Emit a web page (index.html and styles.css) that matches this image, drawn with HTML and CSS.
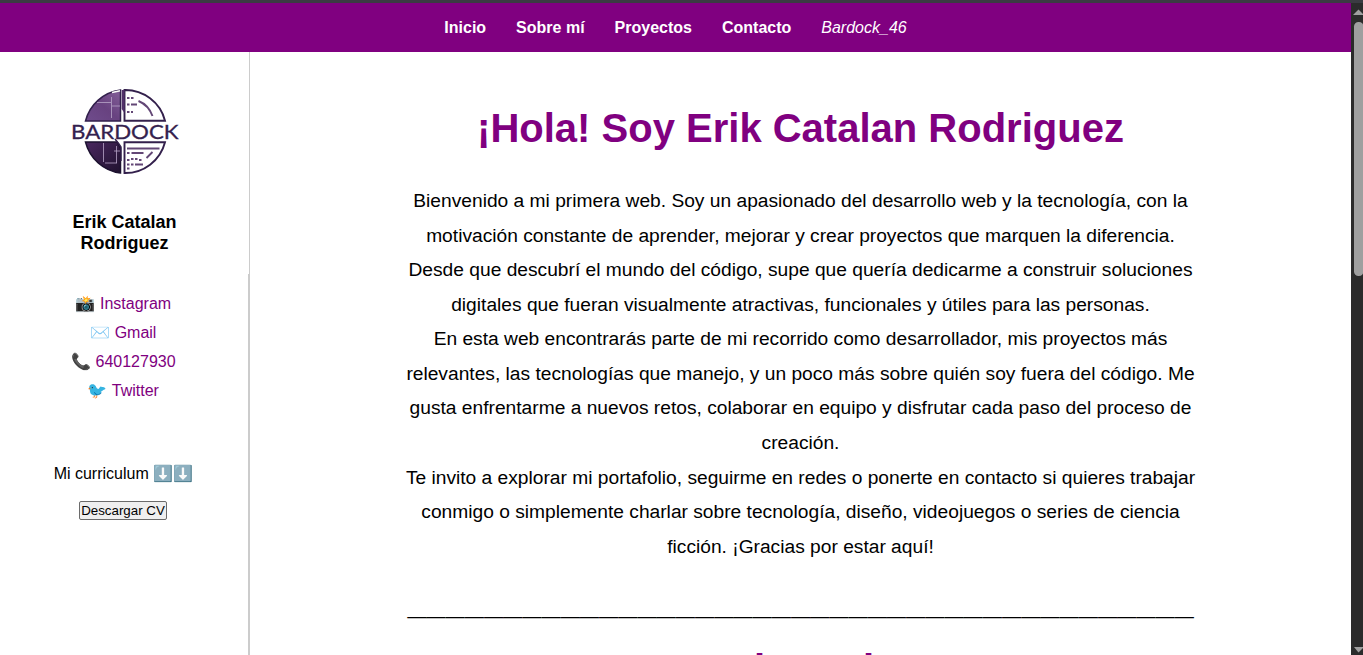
FILE: index.html
```html
<!DOCTYPE html>
<html lang="es">
<head>
<meta charset="utf-8">
<title>Erik Catalan Rodriguez</title>
<link rel="stylesheet" href="styles.css">
</head>
<body>
<div class="window">
<div class="page">
  <nav class="navbar">
    <a>Inicio</a><a>Sobre mí</a><a>Proyectos</a><a>Contacto</a><em>Bardock_46</em>
  </nav>
  <div class="columns">
    <aside class="sidebar">
      <div class="profile">
        <svg class="logo" viewBox="60 80 130 105" width="130" height="105">
          <defs>
            <linearGradient id="top" x1="0" y1="1" x2="1" y2="0"><stop offset="0" stop-color="#6f4c8c"/><stop offset=".5" stop-color="#684280"/><stop offset="1" stop-color="#846099"/></linearGradient>
            <linearGradient id="bottom" x1="0" y1="0" x2="1" y2="1"><stop offset="0" stop-color="#4a2860"/><stop offset="1" stop-color="#20122f"/></linearGradient>
          </defs>
          <path d="M85.500 121A41.500 41.500 0 0 1 120.500 90V121Z" fill="url(#top)" stroke="#32204c" stroke-width="1.500"/>
          <path d="M85.500 142A41.500 41.500 0 0 0 120.500 173V148L117 142Z" fill="url(#bottom)" stroke="#1d1230" stroke-width="1.500"/>
          <path d="M124.500 90V120.700H165A41 41 0 0 0 124.500 90ZM124.500 142.200V173A41 41 0 0 0 165 142.200Z" fill="#fff" stroke="#33204c" stroke-width="1.900"/>
          <path d="M121.700 90h2.800v23l-2.800-4z" fill="#513069"/>
          <path d="M111.500 97v21M97 102.500h14M112 106h8M103.500 143v19M116.500 146v17M105 163h12M114 151h6" fill="none" stroke="#b8a4c8" stroke-width=".8"/>
          <path d="M112 92.500l8-1.800" stroke="#fff" stroke-width="1.500"/>
          <path d="M127 98h2.500m1.500 0h2.500M127 104.500h2.500m1.500 0h6M127 112h2.500m1.500 0h2M138.500 101q10 4 14 15M127 148.500h32.500M127 153h2.500m2 0h12M127 160h2.500m1.500-1h2.500m1.500 0h2.500m1.500 1h2.500M127 164.500h2.500m1.500 0h2.500m1.500 0h8M127 168.500h2.500M146.500 158l6-6" fill="none" stroke="#634776" stroke-width="1.900"/>
          <text class="logo-name" x="71" y="138.800" textLength="107.500" lengthAdjust="spacingAndGlyphs">BARDOCK</text>
          <path d="M115 139l4 5 2 3v14" fill="none" stroke="#33204c" stroke-width="1.400"/>
        </svg>
        <h3>Erik Catalan Rodriguez</h3>
      </div>
      <div class="contact">
        <ul>
          <li>📸 <a>Instagram</a></li>
          <li>✉️ <a>Gmail</a></li>
          <li>📞 <a>640127930</a></li>
          <li>🐦 <a>Twitter</a></li>
        </ul>
        <p>Mi curriculum ⬇️⬇️</p>
        <button>Descargar CV</button>
      </div>
    </aside>
    <main class="content">
      <h1>¡Hola! Soy Erik Catalan Rodriguez</h1>
      <p>Bienvenido a mi primera web. Soy un apasionado del desarrollo web y la tecnología, con la motivación constante de aprender, mejorar y crear proyectos que marquen la diferencia.<br>
      Desde que descubrí el mundo del código, supe que quería dedicarme a construir soluciones digitales que fueran visualmente atractivas, funcionales y útiles para las personas.<br>
      En esta web encontrarás parte de mi recorrido como desarrollador, mis proyectos más relevantes, las tecnologías que manejo, y un poco más sobre quién soy fuera del código. Me gusta enfrentarme a nuevos retos, colaborar en equipo y disfrutar cada paso del proceso de creación.<br>
      Te invito a explorar mi portafolio, seguirme en redes o ponerte en contacto si quieres trabajar conmigo o simplemente charlar sobre tecnología, diseño, videojuegos o series de ciencia ficción. ¡Gracias por estar aquí!</p>
      <div class="divider">—————————————————————————————————————————</div>
      <h1 class="next">Sobre mi</h1>
    </main>
  </div>
</div>
<div class="scrollbar">
  <svg width="12" height="652" viewBox="0 0 12 652">
    <path d="M2 12L7.500 6.500L13 12Z" fill="#a0a0a0"/>
    <rect x="3" y="19" width="9.500" height="254" rx="4.500" fill="#9f9f9f"/>
    <path d="M3 644h9v1l-4.500 4.500z" fill="#a0a0a0"/>
  </svg>
</div>
</div>
</body>
</html>
```
FILE: styles.css
```css
* { box-sizing: border-box; }
body {
  margin: 0;
  overflow: hidden;
  font: 16px "Liberation Sans", Arial, "Noto Color Emoji", sans-serif;
  color: #000;
  background: #fff;
}
.window { display: flex; height: 655px; border-top: 3px solid #3b3b42; overflow: hidden; }
.page { width: 1351px; height: 652px; overflow: hidden; }
.scrollbar { width: 12px; background: #2b2b2b; }
.scrollbar svg { display: block; }
.navbar {
  display: flex;
  justify-content: center;
  align-items: center;
  gap: 30px;
  height: 49px;
  background: #800080;
  color: #fff;
}
.navbar a { font-weight: bold; }
.columns { display: flex; height: 603px; }
.sidebar { width: 250px; flex: none; display: flex; flex-direction: column; text-align: center; }
.profile { height: 222px; border-right: 1px solid #ccc; padding: 28px 20px 0; }
.logo { display: block; margin: 0 auto 0 40px; }
.logo-name { font: 19.800px Lato, sans-serif; fill: #33214e; stroke: #33214e; stroke-width: .3px; }
.profile h3 { margin: 27px 40px 0; font-size: 18px; line-height: 21px; }
.contact { flex: 1; border-right: 2px solid #ccc; padding: 15px 0 0; }
.contact ul { list-style: none; margin: 0; padding: 0 1.300px 0 0; }
.contact li { height: 29px; line-height: 29px; }
.contact a { color: #800080; }
.contact p { margin: 59px 1.300px 0 0; line-height: 20px; }
.contact button {
  width: 88px;
  height: 19px;
  margin: 17px 2px 0 0;
  padding: 0;
  border: 1px solid #6b6b6b;
  border-radius: 2px;
  background: #efefef;
  color: #000;
  font: 13.333px "Liberation Sans", Arial, sans-serif;
  line-height: 17px;
}
.content { flex: 1; text-align: center; padding: 53px 150px 0; }
.content h1 { margin: 0; color: #800080; font-size: 40px; line-height: 46px; }
.content p { margin: 33px 0 0; font-size: 19.200px; line-height: 34.560px; }
.divider { margin-top: 35px; font-size: 19.200px; line-height: 34.560px; white-space: nowrap; }
.content .next { margin-top: 12px; padding-right: 24px; }
```
